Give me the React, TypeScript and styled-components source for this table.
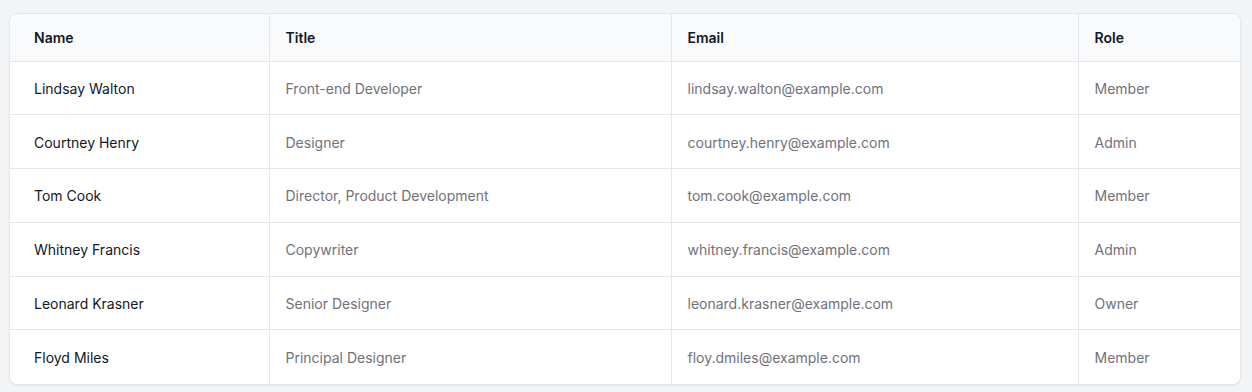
import React from "react";
import styled, { createGlobalStyle } from "styled-components";

const GlobalStyle = createGlobalStyle`
  body {
    margin: 0;
    background: #f3f4f6;
    font-family: Inter, "Noto Sans", sans-serif;
  }
`;

const Page = styled.div`
  padding: 13px 11px 9px 9px;
`;

const Card = styled.div`
  background: #ffffff;
  border: 1px solid #e5e7eb;
  border-radius: 8px;
  box-shadow: 0 1px 2px rgba(0, 0, 0, 0.06);
  overflow: hidden;
`;

const Table = styled.table`
  width: 100%;
  border-collapse: collapse;
  table-layout: fixed;
  font-size: 14px;
`;

const HeadRow = styled.tr`
  background: #f9fafb;
  height: 47px;
`;

const Th = styled.th<{ $first?: boolean }>`
  text-align: left;
  font-weight: 600;
  color: #111827;
  padding: 0 16px 0 ${(p) => (p.$first ? "24px" : "16px")};
  border-left: ${(p) => (p.$first ? "none" : "1px solid #e5e7eb")};
  border-bottom: 1px solid #e5e7eb;
`;

const Row = styled.tr`
  height: 53.8px;
  & + & td {
    border-top: 1px solid #e5e7eb;
  }
`;

const Td = styled.td<{ $first?: boolean }>`
  padding: 1px 16px 0 ${(p) => (p.$first ? "24px" : "16px")};
  border-left: ${(p) => (p.$first ? "none" : "1px solid #e5e7eb")};
  color: ${(p) => (p.$first ? "#111827" : "#71717a")};
  font-weight: 400;
  white-space: nowrap;
`;

const people = [
  { name: "Lindsay Walton", title: "Front-end Developer", email: "lindsay.walton@example.com", role: "Member" },
  { name: "Courtney Henry", title: "Designer", email: "courtney.henry@example.com", role: "Admin" },
  { name: "Tom Cook", title: "Director, Product Development", email: "tom.cook@example.com", role: "Member" },
  { name: "Whitney Francis", title: "Copywriter", email: "whitney.francis@example.com", role: "Admin" },
  { name: "Leonard Krasner", title: "Senior Designer", email: "leonard.krasner@example.com", role: "Owner" },
  { name: "Floyd Miles", title: "Principal Designer", email: "floy.dmiles@example.com", role: "Member" },
];

const App = () => (
  <>
    <GlobalStyle />
    <Page>
      <Card>
        <Table>
          <colgroup>
            <col style={{ width: 259 }} />
            <col style={{ width: 402 }} />
            <col style={{ width: 407 }} />
            <col />
          </colgroup>
          <thead>
            <HeadRow>
              <Th $first>Name</Th>
              <Th>Title</Th>
              <Th>Email</Th>
              <Th>Role</Th>
            </HeadRow>
          </thead>
          <tbody>
            {people.map((p) => (
              <Row key={p.email}>
                <Td $first>{p.name}</Td>
                <Td>{p.title}</Td>
                <Td>{p.email}</Td>
                <Td>{p.role}</Td>
              </Row>
            ))}
          </tbody>
        </Table>
      </Card>
    </Page>
  </>
);

export default App;
